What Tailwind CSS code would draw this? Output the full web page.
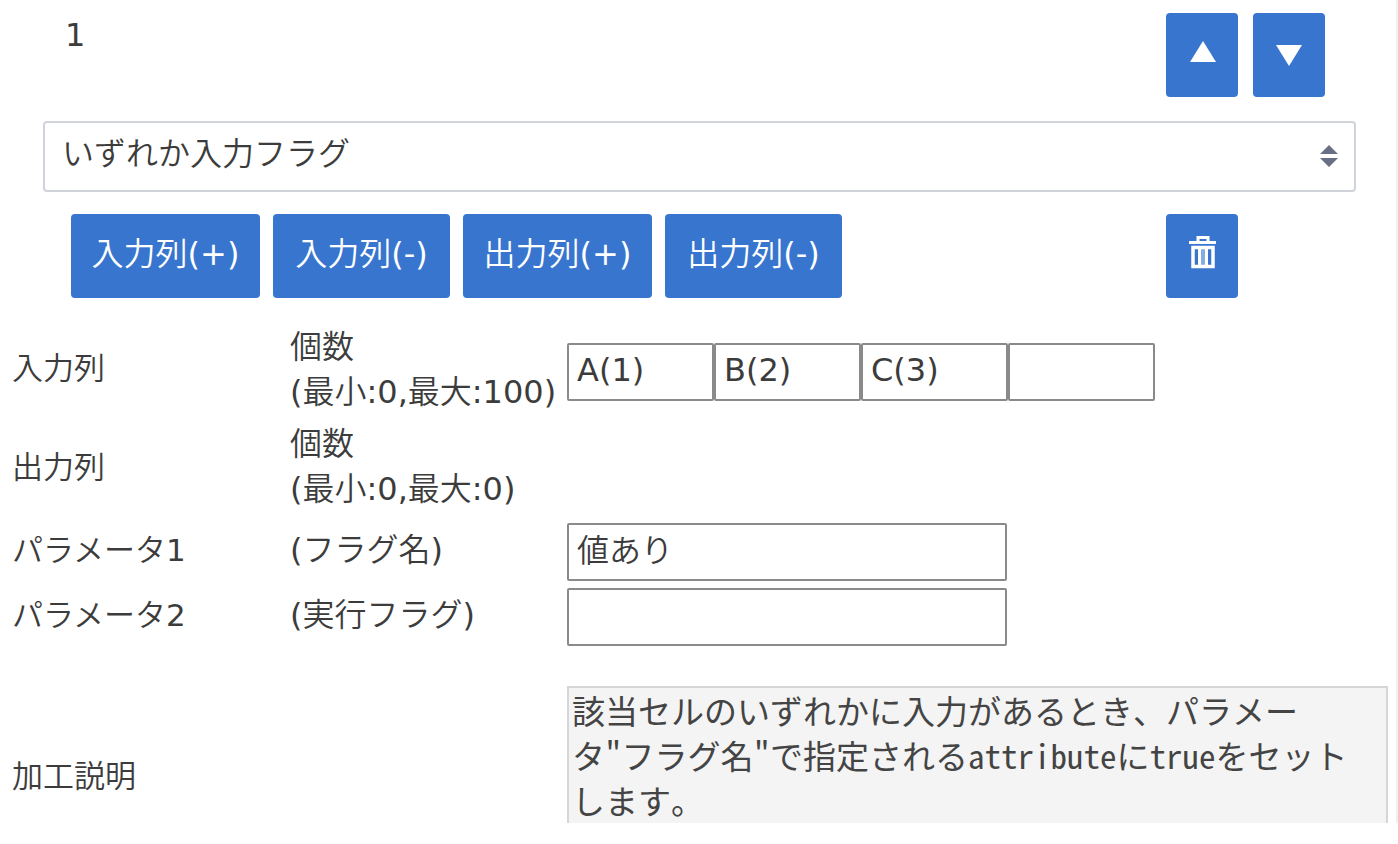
<!DOCTYPE html>
<html lang="ja">
<head>
    <meta charset="UTF-8">
    <meta name="viewport" content="width=device-width, initial-scale=1.0">
    <title>加工設定</title>
    <script src="https://cdn.jsdelivr.net/npm/@tailwindcss/browser@4"></script>
</head>
<body class="bg-white font-['DejaVu_Sans','Noto_Sans_CJK_JP_DemiLight','Noto_Sans_CJK_JP_Light','Noto_Sans_CJK_JP',sans-serif] text-[32px] leading-[45px] text-[#3c3c3c]">
    <form class="border-r-2 border-[#f0f0f0]">
        <div class="flex justify-between pt-[13px] pl-[65px]">
            <span>1</span>
            <div class="flex w-[230px] gap-[15px]">
                <button type="button" aria-label="上へ" class="h-[84px] w-[72px] rounded-sm bg-[#3875ce] text-white">
                    <svg class="h-[84px] w-[72px]" viewBox="0 0 72 84" fill="currentColor"><path d="M37 28L50 49H24z" /></svg>
                </button>
                <button type="button" aria-label="下へ" class="h-[84px] w-[72px] rounded-sm bg-[#3875ce] text-white">
                    <svg class="h-[84px] w-[72px]" viewBox="0 0 72 84" fill="currentColor"><path d="M23 32H49L36 53z" /></svg>
                </button>
            </div>
        </div>

        <div class="relative mt-6 mr-10 ml-[43px]">
            <select aria-label="加工" class="block h-[71px] w-full appearance-none rounded-sm border-2 border-[#d0d3d9] bg-white pr-16 pb-1 pl-[17px]">
                <option>いずれか入力フラグ</option>
            </select>
            <svg class="pointer-events-none absolute top-6 right-[18px] h-[22px] w-[18px]" viewBox="0 0 18 22" fill="#697086"><path d="M9 0L18 9H0zM0 13H18L9 22z" /></svg>
        </div>

        <div class="mt-[22px] flex justify-between pl-[71px] text-white">
            <div class="flex gap-[13px]">
                <button type="button" class="h-[84px] w-[189px] rounded-sm bg-[#3875ce] pb-1">入力列(+)</button>
                <button type="button" class="h-[84px] w-[177px] rounded-sm bg-[#3875ce] pb-1">入力列(-)</button>
                <button type="button" class="h-[84px] w-[189px] rounded-sm bg-[#3875ce] pb-1">出力列(+)</button>
                <button type="button" class="h-[84px] w-[177px] rounded-sm bg-[#3875ce] pb-1">出力列(-)</button>
            </div>
            <div class="w-[230px]">
                <button type="button" aria-label="削除" class="block h-[84px] w-[72px] rounded-sm bg-[#3875ce]">
                    <svg class="h-[84px] w-[72px]" viewBox="0 0 72 84" fill="none" stroke="currentColor">
                        <path d="M23 28.5H50" stroke-width="3" />
                        <path d="M32 28V23.500H42V28" stroke-width="3" />
                        <path d="M27 33.500H47V52.500H27z" stroke-width="3.500" />
                        <path d="M33.500 34V52M40.500 34V52" stroke-width="3" />
                        <path d="M37 35V51" stroke-width="4" stroke-opacity="0.4" />
                    </svg>
                </button>
            </div>
        </div>

        <div class="mt-[27px] grid grid-cols-[278px_277px_1fr] items-center gap-y-[7px] pr-2 pl-3">
            <span class="pb-1 text-[31px]">入力列</span>
            <span class="whitespace-nowrap">個数<br>(最小:0,最大:100)</span>
            <div class="flex pt-1">
                <input type="text" aria-label="入力列1" value="A(1)" class="h-[58px] w-[147px] rounded-xs border-2 border-[#8a8a8a] px-2 pb-1">
                <input type="text" aria-label="入力列2" value="B(2)" class="h-[58px] w-[147px] rounded-xs border-2 border-[#8a8a8a] px-2 pb-1">
                <input type="text" aria-label="入力列3" value="C(3)" class="h-[58px] w-[147px] rounded-xs border-2 border-[#8a8a8a] px-2 pb-1">
                <input type="text" aria-label="入力列4" class="h-[58px] w-[147px] rounded-xs border-2 border-[#8a8a8a] px-2 pb-1">
            </div>

            <span class="pb-1 text-[31px]">出力列</span>
            <span class="col-span-2 pb-1">個数<br>(最小:0,最大:0)</span>

            <label for="param1" class="pb-1 text-[31px]">パラメータ1</label>
            <span class="pb-1">(フラグ名)</span>
            <input type="text" id="param1" value="値あり" class="h-[58px] w-[440px] rounded-xs border-2 border-[#8a8a8a] px-2 pb-2">

            <label for="param2" class="pb-1 text-[31px]">パラメータ2</label>
            <span class="pb-1">(実行フラグ)</span>
            <input type="text" id="param2" class="h-[58px] w-[440px] rounded-xs border-2 border-[#8a8a8a] px-2 pb-2">

            <label for="description" class="col-span-2 pt-[76px] text-[31px]">加工説明</label>
            <textarea id="description" readonly rows="3" class="mt-[33px] block w-full resize-none overflow-hidden border-2 border-b-0 border-[#d6d6d6] bg-[#f4f4f4] pl-[3px] font-['Noto_Sans_Mono_CJK_JP','Noto_Sans_CJK_JP',monospace] text-[33px] leading-[45px] text-[#444]">該当セルのいずれかに入力があるとき、パラメー
タ"フラグ名"で指定されるattributeにtrueをセット
します。</textarea>
        </div>
    </form>
</body>
</html>
